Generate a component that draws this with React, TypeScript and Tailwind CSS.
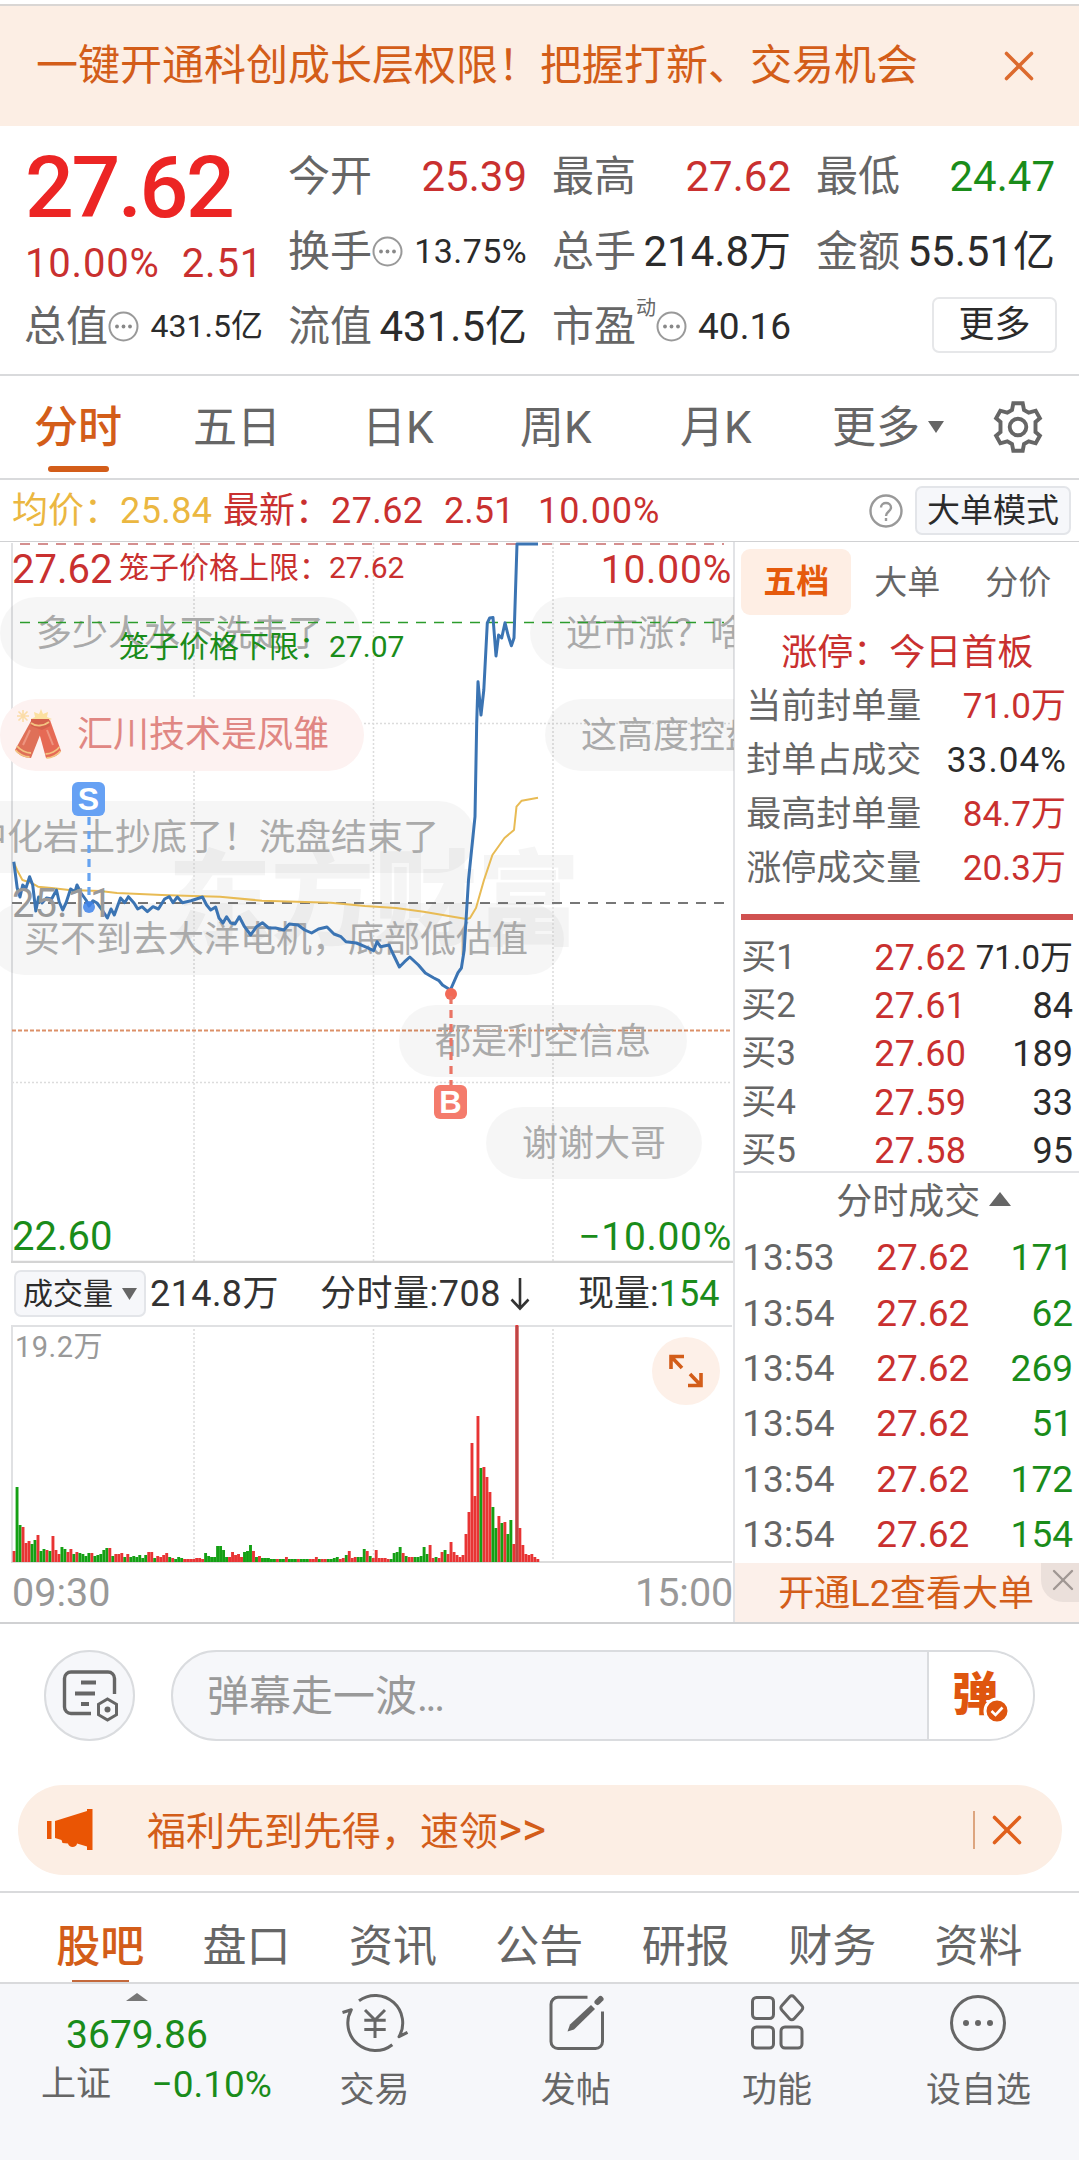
import React from "react";
import { X } from "lucide-react";

const RED = "text-[#c9302f]";
const GREEN = "text-[#1a8c1a]";

const BLUE_LINE =
  "13.8,861.7 17.2,888 20,897 22.7,885 26,888 29.6,876.7 32.7,885 35.8,911 38.6,897 42,903 46.5,898 51.6,899 56.5,890 59.2,902 62.7,910 66,903 70.6,889 75,891.7 77,885 81,893 86,900 89,906 93,900.7 97,903 103.3,911.7 107.4,918 111,909 114.3,915 120.5,898 124.7,902.7 128.4,896.7 134,903 137.7,909 142,906.7 147.4,911.7 153,906.7 158.4,909 164.6,899 169.4,896.7 173,902.7 177.3,897 182.5,902.7 191,900.7 202.5,897 206.6,905 210.7,910 215.6,907 219,918 223,923 226.6,916.7 230.7,923 235,924 239.3,916.7 244.5,926.7 250.7,935 256.5,926.7 262.4,922.7 268.6,928 275.5,928 284,930 289.3,924 298,925 304.8,930 311.6,933 318.5,929 327,927 334,934 341,936.7 346,941.7 356.4,943 365,946.7 373.6,950.7 377,941.7 380.5,946.7 389,945 392.6,953 399.4,967 404.6,961.7 409.8,957 418.4,965 425.3,973 433.9,978 439,980.7 442.5,985 450.4,990 458,972.7 461.4,968 464.2,950 468.5,880 475,816.7 476.7,723 478,681.7 481,715 483.8,690 487.3,623 489.7,618 493,617.5 496,656 498.6,635 501.7,638 505,622.7 508,635 511.4,645.7 514,638 517,544 538,544";

const AVG_LINE =
  "14,863 17,870 22.4,880 31,882.7 38,886.7 51.6,888 69,890 100,891 117,893 162,895 193,896 220,896.7 262,900.7 330.6,902.7 365,906 396,908 423.6,911.7 454.5,917 466.6,919 470,918 476,908 484,880 492.4,855 504.5,838 514,830 516.5,806.7 521.7,800.7 538,797.7";

// One entry per minute: r = rising, g = falling, then the bar height.
const VOLUME =
  "r11 g75 g37 r35 r19 r21 g18 g22 r27 g11 g13 r12 g11 r26 r12 r8 g15 g13 r10 r13 g8 r10 g9 g8 g6 g9 r9 g6 g7 g8 g12 g14 r14 g6 r8 r8 r9 g5 r8 g5 g6 g5 g7 g4 g7 r10 r10 g4 r6 r5 r7 r9 g5 r4 g3 g5 g4 r3 r3 r3 r3 r4 r4 r3 g9 g6 g5 g5 g16 g16 g12 g5 r5 r10 r7 r8 r5 g10 g11 g17 r11 g5 r6 g4 g4 g4 g3 g3 r3 g3 g3 r5 g3 g3 g3 r3 g3 g3 g3 r3 r3 r5 g3 r3 r3 g3 g3 g4 g5 r3 r4 g7 r11 r4 r5 g5 g5 g13 r11 g6 r4 r12 r4 r4 r4 r3 g3 g9 g10 g15 r9 g6 r5 r5 g5 g5 g6 g15 g8 r17 r4 g5 r4 r10 g12 r8 r20 r10 r7 r5 r7 r28 r50 r119 r66 r146 g94 r95 r85 r70 g55 g34 r46 g39 r40 g28 g42 r18 r237 r34 r17 r8 r7 r8 r5 r3".split(
    " "
  );

function Dots() {
  return (
    <svg className="size-[31px] shrink-0" viewBox="0 0 31 31" fill="none">
      <circle cx="15.5" cy="15.5" r="14" stroke="#999" strokeWidth="2" />
      <circle cx="9" cy="15.5" r="1.9" fill="#888" />
      <circle cx="15.5" cy="15.5" r="1.9" fill="#888" />
      <circle cx="22" cy="15.5" r="1.9" fill="#888" />
    </svg>
  );
}

function Stat({
  label,
  value,
  tone = "text-[#2b2b2b]",
  size = "text-[42px]",
  dots = false,
  sup,
}: {
  label: string;
  value: string;
  tone?: string;
  size?: string;
  dots?: boolean;
  sup?: string;
}) {
  return (
    <div className="flex h-[75px] items-center justify-between whitespace-nowrap leading-[75px]">
      <div className="-ml-px flex items-center text-[42px] text-[#666]">
        {label}
        {sup && <span className="h-[72px] text-[20px] leading-[34px]">{sup}</span>}
        {dots && <Dots />}
      </div>
      <span className={`${tone} ${size}`}>{value}</span>
    </div>
  );
}

function Header() {
  return (
    <section className="grid h-[250px] grid-cols-[238px_238px_238px_238px] grid-rows-[75px_75px_75px] gap-x-[26px] border-b-2 border-[#d9dadc] pt-[13px] pl-[25px]">
      <div className="row-span-2 whitespace-nowrap">
        <div className="h-[100px] text-[86px] font-medium leading-[98px] tracking-[-2.4px] text-[#ec2524]">27.62</div>
        <div className={`flex h-[50px] text-[40px] leading-[50px] tracking-[0.8px] ${RED}`}>
          <span className="w-[158px]">10.00%</span>
          <span>2.51</span>
        </div>
      </div>
      <Stat label="今开" value="25.39" tone={RED} />
      <Stat label="最高" value="27.62" tone={RED} />
      <Stat label="最低" value="24.47" tone={GREEN} />
      <Stat label="换手" value="13.75%" size="text-[34px] tracking-[0.4px]" dots />
      <Stat label="总手" value="214.8万" />
      <Stat label="金额" value="55.51亿" />
      <Stat label="总值" value="431.5亿" size="text-[32px]" dots />
      <Stat label="流值" value="431.5亿" />
      <Stat label="市盈" value="40.16" size="text-[37px]" sup="动" dots />
      <div className="flex items-center justify-end">
        <button className="-mr-[2px] -mt-[3px] h-[56px] w-[125px] rounded-[7px] border-2 border-[#e6e7e9] text-[36px] leading-[50px] text-[#2b2b2b]">
          更多
        </button>
      </div>
    </section>
  );
}

function Gear() {
  return (
    <svg className="size-[54px]" viewBox="0 0 54 54" fill="none" stroke="#666" strokeWidth="3.900" strokeLinejoin="miter">
      <path d="M22.300 3.300h9.400l1.300 6.700 4.700 2.700 7-2 4.200 7.600-4.400 3.700v10l4.400 3.700-4.200 7.600-7-2-4.700 2.700-1.300 6.700h-9.400L21 44l-4.700-2.700-7 2-4.200-7.600L9.500 32V22l-4.400-3.700 4.200-7.600 7 2L21 10z" />
      <circle cx="27" cy="27" r="8.300" />
    </svg>
  );
}

function PeriodTabs() {
  return (
    <nav className="flex h-[104px] items-center border-b-2 border-[#d9dadc] pl-[34px] text-[44px] leading-[60px] text-[#666]">
      <div className="flex h-[90px] w-[159px] flex-col justify-between pt-[16px]">
        <span className="font-medium text-[#d35d19]">分时</span>
        <span className="ml-[14px] h-[6px] w-[61px] shrink-0 rounded-full bg-[#d35d19]" />
      </div>
      <span className="mt-[3px] w-[169px]">五日</span>
      <span className="mt-[3px] w-[158px]">日K</span>
      <span className="mt-[3px] w-[160px]">周K</span>
      <span className="mt-[3px] w-[152px]">月K</span>
      <span className="mt-[3px] flex w-[159px] items-center gap-[8px]">
        更多
        <svg className="-mt-[2px] h-[12px] w-[16px]" viewBox="0 0 16 12">
          <path d="M0 0h16l-8 12z" fill="#666" />
        </svg>
      </span>
      <Gear />
    </nav>
  );
}

function QuoteLine() {
  return (
    <div className={`flex h-[62px] items-center whitespace-nowrap pl-[12px] text-[36px] leading-[60px] ${RED}`}>
      <span className="w-[211px] text-[#ebb741]">均价：<span className="tracking-[0.4px]">25.84</span></span>
      <span className="w-[221px]">最新：<span className="tracking-[0.4px]">27.62</span></span>
      <span className="w-[94px]">2.51</span>
      <span className="w-[330px] tracking-[0.9px]">10.00%</span>
      <svg className="size-[36px]" viewBox="0 0 36 36" fill="none" stroke="#999" strokeWidth="2.4">
        <circle cx="18" cy="18" r="15.5" />
        <path d="M13 14.5c0-6 10-6 10 0 0 4-5 4-5 8.500" />
        <path d="M18 25v3" />
      </svg>
      <button className="ml-[11px] h-[49px] w-[156px] rounded-[7px] border-2 border-[#e3e5e9] bg-[#f6f7fa] text-[33px] leading-[46px] text-[#2b2b2b]">
        大单模式
      </button>
    </div>
  );
}

const PILLS = [
  { text: "多少人水下洗走了", cls: "left-0 top-[55px] bg-[#000]/[0.035] text-[#aaa]" },
  { text: "逆市涨？啥情况", cls: "left-[530px] top-[55px] bg-[#000]/[0.035] text-[#aaa]" },
  { text: "这高度控盘啊", cls: "left-[545px] top-[157px] bg-[#000]/[0.035] text-[#aaa]" },
  { text: "中化岩土抄底了！洗盘结束了", cls: "left-[-65px] top-[259px] bg-[#000]/[0.035] text-[#aaa]" },
  { text: "买不到去大洋电机，底部低估值", cls: "left-[-12px] top-[361px] bg-[#000]/[0.035] text-[#aaa]" },
  { text: "都是利空信息", cls: "left-[399px] top-[463px] bg-[#000]/[0.035] text-[#aaa]" },
  { text: "谢谢大哥", cls: "left-[486px] top-[565px] bg-[#000]/[0.035] text-[#aaa]" },
];

function Firecracker() {
  return (
    <svg className="h-[52px] w-[48px]" viewBox="0 0 48 52">
      <g stroke="#fbdca8" strokeWidth="1.6">
        <path d="M9 1v12M3 7h12M4.500 2.500l9 9M13.500 2.500l-9 9" />
      </g>
      <path d="M27 0l2 5 5-2-1 5 5 2-5 2 1 4H20l1-4-4-2 4-2-1-5 5 2z" fill="#fce0a0" />
      <path d="M17 12l13 4-13 33c-6 0-13-3-16-8z" fill="#df7058" />
      <path d="M36 11l-13 5 9 33c6 0 12-2 15-7z" fill="#e66a55" />
      <path d="M17 10l18 0 1 7-8 4-11-4z" fill="#d4604c" />
      <path d="M3 37c3 4 9 7 14 7M1.500 41c3 4 9 7 14 7M45.500 38c-3 4-9 7-14 7M46.500 42c-3 4-9 7-14 7M17 14c5 4 13 3 18-1" fill="none" stroke="#f3c281" strokeWidth="1.800" />
      <path d="M16 21L9 36M33 21l6 15" stroke="#ee9580" strokeWidth="2" />
    </svg>
  );
}

function PriceChart() {
  return (
    <div className="relative h-[721px] w-[734px] overflow-hidden">
      <div className="absolute left-[168px] top-[295px] text-[103px] font-black leading-[130px] text-[#f5f5f5]">
        东方财富
      </div>
      <svg className="absolute inset-0 h-full w-full" viewBox="0 542 734 721" fill="none">
        <g stroke="#dcdcdc" strokeWidth="1.500" strokeDasharray="2 2">
          <path d="M194 543V1262M373.500 543V1262M553 543V1262M12 723.500H732M12 1082.500H732" />
        </g>
        <path d="M12 543V1262" stroke="#e0e1e3" strokeWidth="2" />
        <path d="M11 1262H733" stroke="#d4d4d4" strokeWidth="2.500" />
        <path d="M20 544H724" stroke="#d48f8f" strokeWidth="2.200" strokeDasharray="10 8" />
        <path d="M12 903H732" stroke="#777" strokeWidth="1.800" strokeDasharray="10 8" />
        <path d="M12 1030.500H732" stroke="#dc9068" strokeWidth="2" strokeDasharray="4 2" />
      </svg>
      {PILLS.map((p) => (
        <div key={p.text} className={`absolute h-[72px] whitespace-nowrap rounded-full px-[36px] text-[36px] leading-[74px] ${p.cls}`}>
          {p.text}
        </div>
      ))}
      <div className="absolute left-0 top-[157px] flex h-[72px] w-[364px] items-center gap-[15px] rounded-full bg-[#fdf2f1] pl-[14px] text-[36px] leading-[74px] text-[#e08783]">
        <Firecracker />
        汇川技术是凤雏
      </div>
      <svg className="absolute inset-0 h-full w-full" viewBox="0 542 734 721" fill="none">
        <path d="M20 622.500H724" stroke="#2c9c2c" strokeWidth="1.400" strokeDasharray="10 8" />
        <polyline points={AVG_LINE} stroke="#e8bb54" strokeWidth="2" strokeLinejoin="round" />
        <polyline points={BLUE_LINE} stroke="#3b74b3" strokeWidth="3" strokeLinejoin="round" />
        <path d="M89 817V900" stroke="#66a3f0" strokeWidth="3.200" strokeDasharray="8 6" />
        <circle cx="89" cy="907" r="6" fill="#3d82ea" opacity="0.850" />
        <circle cx="451" cy="994" r="6" fill="#f26a57" />
        <path d="M451 996V1085" stroke="#ea7465" strokeWidth="3.200" strokeDasharray="8 6" />
      </svg>
      <div className="absolute left-[72px] top-[240px] h-[34px] w-[33px] rounded-[6px] bg-[#66a1f4] text-center font-['Liberation_Sans'] text-[32px] font-bold leading-[35px] text-white">
        S
      </div>
      <div className="absolute left-[434px] top-[543px] h-[34px] w-[33px] rounded-[6px] bg-[#f47b6c] text-center font-['Liberation_Sans'] text-[31px] font-bold leading-[35px] text-white">
        B
      </div>
      <span className={`absolute left-[12px] top-[7px] text-[40px] leading-[42px] ${RED}`}>27.62</span>
      <span className={`absolute left-[119px] top-[6px] whitespace-nowrap text-[30px] leading-[40px] ${RED}`}>笼子价格上限：27.62</span>
      <span className={`absolute left-[119px] top-[85px] whitespace-nowrap text-[30px] leading-[40px] ${GREEN}`}>笼子价格下限：27.07</span>
      <span className={`absolute right-[2px] top-[7px] text-[39px] leading-[42px] tracking-[0.8px] ${RED}`}>10.00%</span>
      <span className="absolute left-[12px] top-[341px] text-[40px] leading-[42px] text-[#999]">25.11</span>
      <span className={`absolute left-[12px] top-[674px] text-[40px] leading-[42px] ${GREEN}`}>22.60</span>
      <span className={`absolute right-[2px] top-[674px] text-[39px] leading-[42px] tracking-[0.7px] ${GREEN}`}>−10.00%</span>
    </div>
  );
}

function VolumeChart() {
  return (
    <>
      <div className="flex h-[62px] items-center whitespace-nowrap pl-[14px] text-[36px] leading-[60px] text-[#333]">
        <button className="flex h-[47px] w-[132px] items-center justify-center gap-[9px] rounded-[7px] border-2 border-[#e3e5e9] bg-[#f6f7fa] text-[30px] text-[#2b2b2b]">
          成交量
          <svg className="h-[12px] w-[15px]" viewBox="0 0 15 12">
            <path d="M0 0h15l-7.500 12z" fill="#666" />
          </svg>
        </button>
        <span className="ml-[4px] w-[170px] tracking-[0.4px]">214.8万</span>
        <span className="flex w-[258px] items-center gap-[9px]">
          <span className="tracking-[0.5px]">分时量:708</span>
          <svg className="h-[34px] w-[20px]" viewBox="0 0 20 34" fill="none" stroke="#333" strokeWidth="2.600">
            <path d="M10 1v30M1.500 22.500L10 31.500l8.500-9" />
          </svg>
        </span>
        <span>
          现量:<span className={GREEN}>154</span>
        </span>
      </div>
      <div className="relative h-[238px]">
        <svg className="h-[238px] w-[734px]" viewBox="0 1325 734 238" fill="none">
          <path d="M194 1325V1562M373.500 1325V1562M553 1325V1562" stroke="#dcdcdc" strokeWidth="1.500" strokeDasharray="2 2" />
          <path d="M12 1562V1326H732" stroke="#e0e1e3" strokeWidth="2" />
          <path d="M11 1562H732" stroke="#dcdcdc" strokeWidth="2" />
          {VOLUME.map((v, i) => {
            const h = Number(v.slice(1));
            return (
              <rect key={i} x={12.6 + i * 2.993} y={1562 - h} width="2.900" height={h} fill={v[0] === "r" ? "#e83434" : "#14a014"} />
            );
          })}
          <path d="M517 1326V1562" stroke="#bf4545" strokeWidth="3" />
        </svg>
        <span className="absolute left-[15px] top-[4px] text-[29px] leading-[36px] tracking-[0.5px] text-[#999]">19.2万</span>
        <div className="absolute left-[652px] top-[12px] flex size-[68px] items-center justify-center rounded-full bg-[#fdf0e8]">
          <svg className="size-[36px]" viewBox="0 0 36 36" fill="none" stroke="#d35d19" strokeWidth="3.600">
            <path d="M3 16V3.500h13M3.500 4L14 15M33 20v12.500H20M32.500 32L22 21" />
          </svg>
        </div>
      </div>
      <div className="flex h-[59px] justify-between pr-[1px] pl-[12px] text-[39.500px] leading-[60px] text-[#999]">
        <span>09:30</span>
        <span>15:00</span>
      </div>
    </>
  );
}

const SEAL = [
  ["当前封单量", "71.0万", RED],
  ["封单占成交", "33.04%", "text-[#2b2b2b] tracking-[1.1px] -mr-[1px]"],
  ["最高封单量", "84.7万", RED],
  ["涨停成交量", "20.3万", RED],
];
const BIDS = [
  ["买1", "27.62", "71.0万"],
  ["买2", "27.61", "84"],
  ["买3", "27.60", "189"],
  ["买4", "27.59", "33"],
  ["买5", "27.58", "95"],
];
const TRADES = [
  ["13:53", "171"],
  ["13:54", "62"],
  ["13:54", "269"],
  ["13:54", "51"],
  ["13:54", "172"],
  ["13:54", "154"],
];

function OrderBook() {
  return (
    <aside className="-ml-px w-[346px] border-l-2 border-[#e2e3e6] whitespace-nowrap">
      <div className="flex h-[81px] items-center pl-[6px] text-[33px] leading-[65px] text-[#666]">
        <span className="h-[66px] w-[110px] rounded-[9px] bg-[#feeee4] text-center font-bold text-[#e55a0c]">五档</span>
        <span className="w-[112px] text-center">大单</span>
        <span className="w-[110px] text-center">分价</span>
      </div>
      <div className={`h-[57px] pl-[46px] text-[36px] leading-[61px] ${RED}`}>涨停：今日首板</div>
      {SEAL.map(([k, v, tone]) => (
        <div key={k} className="flex h-[54.2px] justify-between pr-[13px] pl-[11px] text-[35px] leading-[54px]">
          <span className="text-[#666]">{k}</span>
          <span className={tone}>{v}</span>
        </div>
      ))}
      <div className="mt-[18px] mr-[6px] ml-[6px] h-[6px] bg-[#d05150]" />
      <div className="h-[253px] border-b-2 border-[#e2e3e6] pt-[14px]">
        {BIDS.map(([k, p, v]) => (
          <div key={k} className="flex h-[48.1px] justify-between pr-[6px] pl-[6px] text-[36px] leading-[48px]">
            <span className="w-[133px] text-[35px] text-[#666]">{k}</span>
            <span className={`tracking-[0.3px] ${RED}`}>{p}</span>
            <span className={`flex-1 text-right text-[#2b2b2b] ${v.endsWith("万") ? "text-[33px]" : "text-[36px]"}`}>{v}</span>
          </div>
        ))}
      </div>
      <div className="flex h-[57px] items-center gap-[9px] pl-[101px] text-[36px] leading-[58px] text-[#666]">
        分时成交
        <svg className="-mt-[6px] h-[14px] w-[22px]" viewBox="0 0 22 14">
          <path d="M11 0l11 14H0z" fill="#666" />
        </svg>
      </div>
      {TRADES.map(([t, v], i) => (
        <div key={i} className="flex h-[55.4px] justify-between pr-[6px] pl-[7px] text-[37px] leading-[56px]">
          <span className="w-[134px] text-[#666]">{t}</span>
          <span className={RED}>27.62</span>
          <span className={`flex-1 text-right ${GREEN}`}>{v}</span>
        </div>
      ))}
      <div className="relative h-[59px] overflow-hidden bg-[#fcf0ea] pl-[43px] text-[36px] leading-[63px] text-[#d35d19]">
        开通L2查看大单
        <div className="absolute top-0 right-0 flex h-[39px] w-[38px] items-center justify-center rounded-bl-[22px] bg-[#ebe0db] pl-[6px] pb-[5px]">
          <X className="shrink-0" size={36} strokeWidth={1.6} color="#a09793" />
        </div>
      </div>
    </aside>
  );
}

function DanmuInput() {
  return (
    <div className="flex h-[162px] items-center gap-[36px] pl-[44px] pb-[17px]">
      <div className="flex size-[91px] items-center justify-center rounded-full border-2 border-[#dadcdf] bg-[#f6f7fa]">
        <svg className="h-[54px] w-[56px]" viewBox="0 0 56 54" fill="none" stroke="#666" strokeWidth="3.400">
          <path d="M29 44.500H9a6.500 6.500 0 0 1-6.500-6.500V9.500A6.500 6.500 0 0 1 9 3h37a6.500 6.500 0 0 1 6.500 6.500V25" />
          <path d="M19 13.500h15M13 24.500h20M19 35h8" strokeWidth="3.800" />
          <path d="M45.500 30l9 5.300v10.400l-9 5.300-9-5.300V35.300z" strokeWidth="3" />
          <circle cx="45.500" cy="40.500" r="3" fill="#666" stroke="none" />
        </svg>
      </div>
      <div className="flex h-[91px] w-[864px] overflow-hidden rounded-full border-2 border-[#dadcdf] bg-[#f6f7fa]">
        <span className="w-[756px] border-r-2 border-[#dadcdf] pl-[34px] text-[42px] leading-[90px] text-[#999]">弹幕走一波<span className="tracking-[-2.500px]">...</span></span>
        <div className="relative flex-1 bg-white">
          <span className="absolute left-[23px] top-[17px] text-[46px] font-black leading-[50px] text-[#df560f]">弹</span>
          <svg className="absolute left-[54px] top-[45px] size-[28px]" viewBox="0 0 28 28">
            <circle cx="14" cy="14" r="12" fill="#df560f" stroke="#fff" strokeWidth="3" />
            <path d="M8.500 14l4 4 7-7.500" fill="none" stroke="#fff" strokeWidth="2.600" />
          </svg>
        </div>
      </div>
    </div>
  );
}

function PromoBar() {
  return (
    <div className="mr-[17px] ml-[18px] flex h-[90px] items-center rounded-full bg-[#fceee4] pl-[28px] text-[39px] leading-[90px] text-[#d35d19]">
      <svg className="h-[42px] w-[48px]" viewBox="0 0 48 42" fill="#ea5504">
        <path d="M1 12h4.500v18H1zM9 12L41 2V0h5.500v41H41v-3.500l-10-3c0 4-8 5-9 0l-5.500-.5-1-3L9 29z" />
      </svg>
      <span className="ml-[53px] w-[826px]">福利先到先得，速领<span className="text-[46px]">&gt;&gt;</span></span>
      <span className="h-[38px] w-[2px] bg-[#dda57f]" />
      <X className="ml-[7px]" size={50} strokeWidth={1.7} color="#e0601c" />
    </div>
  );
}

const SECTIONS = ["股吧", "盘口", "资讯", "公告", "研报", "财务", "资料"];

function SectionTabs() {
  return (
    <nav className="mt-[16px] flex h-[93px] border-y-2 border-[#d9dadc] pl-[27px] text-[44px] text-[#666]">
      {SECTIONS.map((s, i) => (
        <div key={s} className={`flex w-[146.400px] flex-col items-center justify-between ${i === 0 ? "font-medium text-[#d35d19]" : ""}`}>
          <span className="h-[86px] pt-[10px] leading-[88px]">{s}</span>
          {i === 0 && <span className="h-[2px] w-[57px] bg-[#c4693c]" />}
        </div>
      ))}
    </nav>
  );
}

const ACTIONS = [
  {
    label: "交易",
    icon: (
      <g>
        <path d="M16 9.700A27.500 27.500 0 0 1 56 45.700L64.500 41.300" strokeLinejoin="round" />
        <path d="M49.300 53.700A27.500 27.500 0 0 1 8.300 18.700L-0.500 21.500" strokeLinejoin="round" />
        <path d="M22 19l10 10 10-10M32 29v18M21.300 29.300h21.400M21.300 38.500h21.400" />
      </g>
    ),
  },
  {
    label: "发帖",
    icon: (
      <g>
        <path d="M43.500 6.300H14a7 7 0 0 0-7 7V50.500a7 7 0 0 0 7 7H51.500a7 7 0 0 0 7-7V20.500" />
        <path d="M23.500 40.500l2.500-7L47 14l4 4-21 20.500z" fill="#666" stroke="none" />
        <path d="M53.500 11l3-3" strokeWidth="6" strokeLinecap="round" />
      </g>
    ),
  },
  {
    label: "功能",
    icon: (
      <g>
        <rect x="7.500" y="6.500" width="21" height="21" rx="4" />
        <rect x="7.500" y="36" width="21" height="21" rx="4" />
        <rect x="36" y="36" width="21" height="21" rx="4" />
        <path d="M44.700 5.700a3 3 0 0 1 4.200 0l8 9a3 3 0 0 1 0 4.200l-8 9a3 3 0 0 1-4.200 0l-8-9a3 3 0 0 1 0-4.200z" />
      </g>
    ),
  },
  {
    label: "设自选",
    icon: (
      <g>
        <circle cx="32" cy="32" r="26.500" />
        <g fill="#666" stroke="none">
          <circle cx="20" cy="32" r="3" />
          <circle cx="32" cy="32" r="3" />
          <circle cx="44" cy="32" r="3" />
        </g>
      </g>
    ),
  },
];

function BottomBar() {
  return (
    <footer className="flex h-[176px] bg-[#f6f7fa] text-[35px] leading-[48px] text-[#666]">
      <div className="flex w-[274px] flex-col items-center pt-[9px]">
        <svg className="h-[8px] w-[22px]" viewBox="0 0 22 8">
          <path d="M11 0l11 8H0z" fill="#777" />
        </svg>
        <span className={`mt-[15px] text-[39px] leading-[38px] ${GREEN}`}>3679.86</span>
        <div className="mt-[7px] flex w-full justify-between pr-[2px] pl-[41px] whitespace-nowrap">
          <span>上证</span>
          <span className={`text-[37px] ${GREEN}`}>−0.10%</span>
        </div>
      </div>
      {ACTIONS.map((a) => (
        <div key={a.label} className="flex w-[201.300px] flex-col items-center pt-[7px]">
          <svg className="size-[64px] overflow-visible" viewBox="0 0 64 64" fill="none" stroke="#666" strokeWidth="3">
            {a.icon}
          </svg>
          <span className="mt-[12px]">{a.label}</span>
        </div>
      ))}
    </footer>
  );
}

export default function App() {
  return (
    <main className="flex h-[2160px] w-[1079px] flex-col overflow-hidden bg-white font-['Roboto','Noto_Sans_CJK_SC',sans-serif]">
      <div className="mt-[4px] flex h-[122px] shrink-0 items-center border-t-2 border-[#d9d6d4] bg-[#fceee4] pl-[36px] text-[42px] text-[#d35d19]">
        <span className="w-[958px] whitespace-nowrap leading-[122px]">一键开通科创成长层权限！把握打新、交易机会</span>
        <X size={50} strokeWidth={1.7} color="#dc6a2e" />
      </div>
      <Header />
      <PeriodTabs />
      <QuoteLine />
      <div className="-mt-px flex h-[1083px] shrink-0 border-t border-b-2 border-[#d0d1d3]">
        <div className="w-[735px]">
          <PriceChart />
          <VolumeChart />
        </div>
        <OrderBook />
      </div>
      <DanmuInput />
      <PromoBar />
      <SectionTabs />
      <BottomBar />
    </main>
  );
}
